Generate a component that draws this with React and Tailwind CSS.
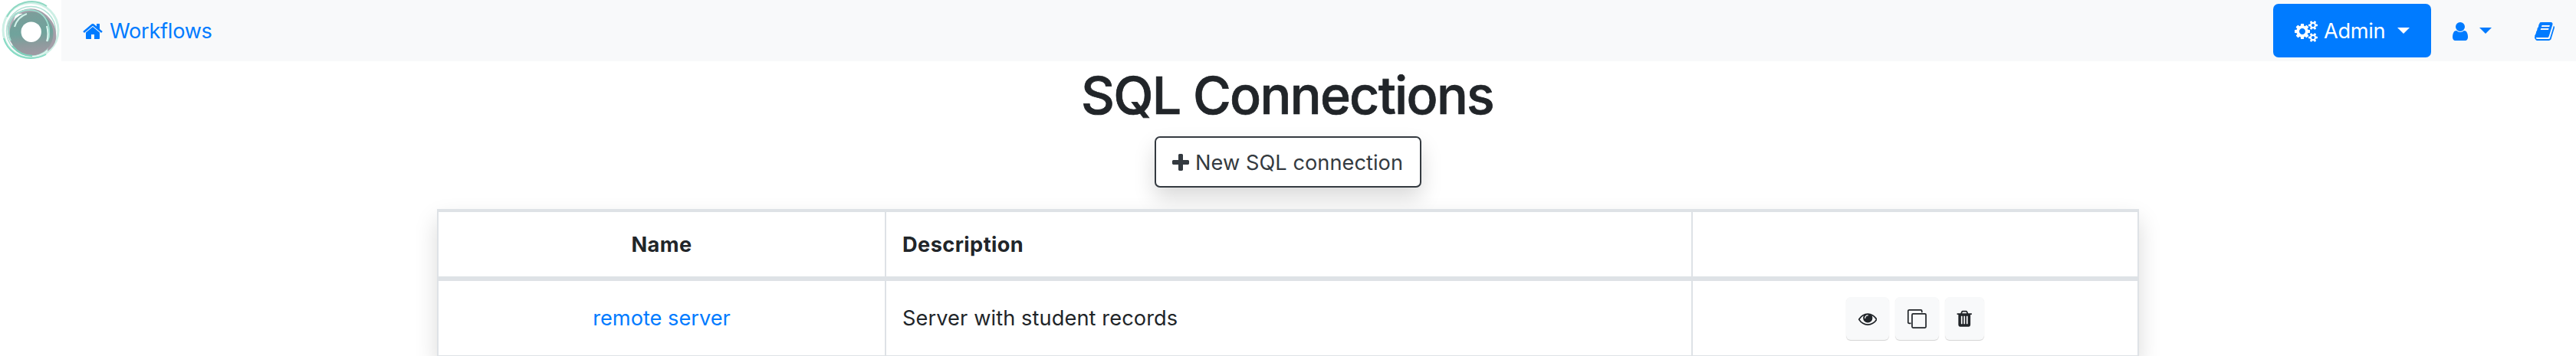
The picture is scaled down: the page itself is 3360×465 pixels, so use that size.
const paths = {
  home: "M1472 992v480q0 26-19 45t-45 19h-384v-384h-256v384h-384q-26 0-45-19t-19-45v-480q0-1 .5-3t.5-3l575-474 575 474q1 2 1 6zm223-69l-62 74q-8 9-21 11h-3q-13 0-21-7l-692-577-692 577q-12 8-24 7-13-2-21-11l-62-74q-8-10-7-23.5t11-21.5l719-599q32-26 76-26t76 26l244 204v-195q0-14 9-23t23-9h192q14 0 23 9t9 23v408l219 182q10 8 11 21.5t-7 23.5z",
  user: "M1536 1399q0 109-62.5 187t-150.5 78h-854q-88 0-150.5-78t-62.5-187q0-85 8.5-160.5t31.5-152 58.5-131 94-89 134.5-34.5q131 128 313 128t313-128q76 0 134.5 34.5t94 89 58.5 131 31.5 152 8.5 160.5zm-256-887q0 159-112.5 271.5t-271.5 112.5-271.5-112.5-112.5-271.5 112.5-271.5 271.5-112.5 271.5 112.5 112.5 271.5z",
  book: "M1703 478q40 57 18 129l-275 906q-19 64-76.5 107.5t-122.5 43.5h-923q-77 0-148.5-53.5t-99.5-131.5q-24-67-2-127 0-4 3-27t4-37q1-8-3-21.5t-3-19.5q2-11 8-21t16.5-23.5 16.5-23.5q23-38 45-91.5t30-91.5q3-10 .5-30t-.5-28q3-11 17-28t17-23q21-36 42-92t25-90q1-9-2.5-32t.5-28q4-13 22-30.5t22-22.5q19-26 42.5-84.5t27.5-96.5q1-8-3-25.5t-2-26.5q2-8 9-18t18-23 17-21q8-12 16.5-30.5t15-35 16-36 19.5-32 26.5-23.5 36-11.5 47.5 5.5l-1 3q38-9 51-9h761q74 0 114 56t18 130l-274 906q-36 119-71.5 153.5t-128.5 34.5h-869q-27 0-38 15-11 16-1 43 24 70 144 70h923q29 0 56-15.5t35-41.5l300-987q7-22 5-57 38 15 59 43zm-1064 2q-4 13 2 22.5t20 9.5h608q13 0 25.5-9.5t16.5-22.5l21-64q4-13-2-22.5t-20-9.5h-608q-13 0-25.5 9.5t-16.5 22.5zm-83 256q-4 13 2 22.5t20 9.5h608q13 0 25.5-9.5t16.5-22.5l21-64q4-13-2-22.5t-20-9.5h-608q-13 0-25.5 9.5t-16.5 22.5z",
  cogs: "M832 896q0-106-75-181t-181-75-181 75-75 181 75 181 181 75 181-75 75-181zm768 512q0-52-38-90t-90-38-90 38-38 90q0 53 37.5 90.5t90.5 37.5 90.5-37.5 37.5-90.5zm0-1024q0-52-38-90t-90-38-90 38-38 90q0 53 37.5 90.5t90.5 37.5 90.5-37.5 37.5-90.5zm-384 421v185q0 10-7 19.5t-16 10.5l-155 24q-11 35-32 76 34 48 90 115 7 11 7 20 0 12-7 19-23 30-82.5 89.5t-78.5 59.5q-11 0-21-7l-115-90q-37 19-77 31-11 108-23 155-7 24-30 24h-186q-11 0-20-7.5t-10-17.5l-23-153q-34-10-75-31l-118 89q-7 7-20 7-11 0-21-8-144-133-144-160 0-9 7-19 10-14 41-53t47-61q-23-44-35-82l-152-24q-10-1-17-9.5t-7-19.5v-185q0-10 7-19.5t16-10.5l155-24q11-35 32-76-34-48-90-115-7-11-7-20 0-12 7-20 22-30 82-89t79-59q11 0 21 7l115 90q34-18 77-32 11-108 23-154 7-24 30-24h186q11 0 20 7.5t10 17.5l23 153q34 10 75 31l118-89q8-7 20-7 11 0 21 8 144 133 144 160 0 8-7 19-12 16-42 54t-45 60q23 48 34 82l152 23q10 2 17 10.5t7 19.5zm640 533v140q0 16-149 31-12 27-30 52 51 113 51 138 0 4-4 7-122 71-124 71-8 0-46-47t-52-68q-20 2-30 2t-30-2q-14 21-52 68t-46 47q-2 0-124-71-4-3-4-7 0-25 51-138-18-25-30-52-149-15-149-31v-140q0-16 149-31 13-29 30-52-51-113-51-138 0-4 4-7 4-2 35-20t59-34 30-16q8 0 46 46.5t52 67.5q20-2 30-2t30 2q51-71 92-112l6-2q4 0 124 70 4 3 4 7 0 25-51 138 17 23 30 52 149 15 149 31zm0-1024v140q0 16-149 31-12 27-30 52 51 113 51 138 0 4-4 7-122 71-124 71-8 0-46-47t-52-68q-20 2-30 2t-30-2q-14 21-52 68t-46 47q-2 0-124-71-4-3-4-7 0-25 51-138-18-25-30-52-149-15-149-31v-140q0-16 149-31 13-29 30-52-51-113-51-138 0-4 4-7 4-2 35-20t59-34 30-16q8 0 46 46.5t52 67.5q20-2 30-2t30 2q51-71 92-112l6-2q4 0 124 70 4 3 4 7 0 25-51 138 17 23 30 52 149 15 149 31z",
  plus: "M1600 736v192q0 40-28 68t-68 28h-416v416q0 40-28 68t-68 28h-192q-40 0-68-28t-28-68v-416h-416q-40 0-68-28t-28-68v-192q0-40 28-68t68-28h416v-416q0-40 28-68t68-28h192q40 0 68 28t28 68v416h416q40 0 68 28t28 68z",
  eye: "M1664 960q-152-236-381-353 61 104 61 225 0 185-131.5 316.5t-316.5 131.5-316.5-131.5-131.5-316.5q0-121 61-225-229 117-381 353 133 205 333.5 326.5t434.5 121.5 434.5-121.5 333.5-326.5zm-720-384q0-20-14-34t-34-14q-125 0-214.5 89.5t-89.5 214.5q0 20 14 34t34 14 34-14 14-34q0-86 61-147t147-61q20 0 34-14t14-34zm848 384q0 34-20 69-140 230-376.5 368.5t-499.5 138.5-499.5-139-376.5-368q-20-35-20-69t20-69q140-229 376.5-368t499.5-139 499.5 139 376.5 368q20 35 20 69z",
  trash: "M704 1376v-704q0-14-9-23t-23-9h-64q-14 0-23 9t-9 23v704q0 14 9 23t23 9h64q14 0 23-9t9-23zm256 0v-704q0-14-9-23t-23-9h-64q-14 0-23 9t-9 23v704q0 14 9 23t23 9h64q14 0 23-9t9-23zm256 0v-704q0-14-9-23t-23-9h-64q-14 0-23 9t-9 23v704q0 14 9 23t23 9h64q14 0 23-9t9-23zm-544-992h448l-48-117q-7-9-17-11h-317q-10 2-17 11zm928 32v64q0 14-9 23t-23 9h-96v948q0 83-47 143.5t-113 60.5h-832q-66 0-113-58.5t-47-141.5v-952h-96q-14 0-23-9t-9-23v-64q0-14 9-23t23-9h309l70-167q15-37 54-63t79-26h320q40 0 79 26t54 63l70 167h309q14 0 23 9t9 23z",
};

function Icon({ name, viewBox = "0 0 1792 1792", className }) {
  return (
    <svg viewBox={viewBox} fill="currentColor" aria-hidden="true" className={`shrink-0 ${className}`}>
      <path d={paths[name]} />
    </svg>
  );
}

function CopyIcon() {
  return (
    <svg viewBox="0 0 25 25" fill="none" stroke="currentColor" strokeWidth="1.7" className="h-[25px] w-[25px]" aria-hidden="true">
      <path d="M4.6 18.3H2.2a1.4 1.4 0 0 1-1.4-1.4V2.2A1.4 1.4 0 0 1 2.2.9h15.2a1.4 1.4 0 0 1 1.4 1.4v1.9" />
      <rect x="6" y="5.9" width="18.1" height="18.2" rx="1.3" />
    </svg>
  );
}

function Caret() {
  return (
    <svg viewBox="0 0 16 8" fill="currentColor" className="h-2 w-4 shrink-0" aria-hidden="true">
      <path d="M0 0h16L8 8z" />
    </svg>
  );
}

function Logo() {
  return (
    <svg viewBox="0 0 80 80" className="h-20 w-20 shrink-0 bg-white" fill="none" aria-label="Logo">
      <defs>
        <linearGradient id="body" x1="0.3" y1="0" x2="0.4" y2="1">
          <stop offset="0" stopColor="#7d9d9a" />
          <stop offset="0.5" stopColor="#6fa39c" />
          <stop offset="0.75" stopColor="#8c9b9d" />
          <stop offset="1" stopColor="#a09aa4" />
        </linearGradient>
        <filter id="soft" x="-10%" y="-10%" width="120%" height="120%">
          <feGaussianBlur stdDeviation="0.7" />
        </filter>
      </defs>
      <g filter="url(#soft)">
        <circle cx="40" cy="39.5" r="36" stroke="#cdefe5" strokeWidth="3" />
        <path d="M9 22a36 36 0 0 1 52-14" stroke="#8fd8c3" strokeWidth="2" />
        <path d="M5 50a36 36 0 0 0 35 26q11 0 20-5" stroke="#86dbc4" strokeWidth="2" />
        <circle cx="40.5" cy="40.5" r="32" stroke="#b0e2d5" strokeWidth="1.5" />
        <path d="M18 19Q42 3 61 20q14 13 12 31-2 10-11 16 4-28-7-38-13-13-33-11z" fill="#a49fa9" />
        <path d="M10 43q-2-16 11-26-7 18-4 34l4 12Q11 55 10 43z" fill="#b5aeb8" />
        <circle cx="41" cy="44" r="28.5" fill="url(#body)" />
        <path d="M14 53a30 30 0 0 1 4-32Q32 9 49 15q17 9 15 33l-2 6" stroke="#9fdfd0" strokeWidth="1.8" />
        <path d="M61 34q3 11 0 20" stroke="#e4fbf5" strokeWidth="1.8" />
        <path d="M19 35q4-13 16-17" stroke="#d0f2e9" strokeWidth="2.2" />
        <path d="M16 60q11 13 26 13" stroke="#7fd0bb" strokeWidth="2.4" />
        <circle cx="40.7" cy="41.7" r="13.2" fill="#fff" />
      </g>
    </svg>
  );
}

function ActionButton({ className, children }) {
  return (
    <button className={`flex h-14 items-center justify-center rounded-[6px] bg-[#f8f9fa] shadow-[0_1px_1px_rgba(0,0,0,0.18)] ${className}`}>
      {children}
    </button>
  );
}

export default function App() {
  return (
    <div className="h-[465px] overflow-hidden bg-white font-['Inter','Liberation_Sans',sans-serif] text-[27.2px] leading-[42px] text-[#212529]">
      <nav className="flex h-20 items-center bg-[#f8f9fa] text-[#007bff]">
        <Logo />
        <a className="ml-[27px] flex items-center pt-0.5">
          <Icon name="home" className="h-7 w-7" />
          <span className="ml-2 tracking-[-0.3px]">Workflows</span>
        </a>
        <div className="ml-auto flex items-center pr-[27px]">
          <button className="flex h-[70px] w-[206px] items-center rounded-[7px] bg-[#007bff] pl-7 text-white">
            <Icon name="cogs" viewBox="-64 0 1920 1792" className="mt-0.5 h-7 w-[30px]" />
            <span className="ml-[8px] w-[96px] pt-0.5 text-left tracking-[-0.3px]">Admin</span>
            <Caret />
          </button>
          <button className="ml-6 flex items-center gap-[11px]">
            <Icon name="user" className="mt-0.5 h-7 w-7" />
            <Caret />
          </button>
          <Icon name="book" className="mt-0.5 ml-[55px] h-7 w-7" />
        </div>
      </nav>
      <main className="flex flex-col items-center">
        <h1 className="h-[98px] pt-0.5 pr-[2px] text-[68px] leading-[84px] font-medium tracking-[-1.7px] [-webkit-text-stroke:0.7px_#212529]">SQL Connections</h1>
        <button className="flex h-[67px] w-[348px] items-center rounded-[7px] border-2 border-[#343a40] bg-white pt-0.5 pl-[18px] text-[#343a40] shadow-[0_14px_28px_rgba(0,0,0,0.15)]">
          <Icon name="plus" className="h-7 w-7" />
          <span className="ml-[5px] whitespace-nowrap tracking-[0.05px]">New SQL connection</span>
        </button>
        <div className="mt-7 w-[2220px] border-x-2 border-t-4 border-b-2 border-[#dee2e6] bg-white shadow-[0_14px_28px_rgba(0,0,0,0.15)]">
          <div className="grid h-[90px] grid-cols-[584px_1052px_580px] border-b-6 border-[#dee2e6] font-bold tracking-[0.4px]">
            <div className="flex items-center justify-center border-r-2 border-[#dee2e6] pt-0.5">Name</div>
            <div className="flex items-center border-r-2 border-[#dee2e6] pt-0.5 pl-[21px]">Description</div>
            <div />
          </div>
          <div className="grid h-[97px] grid-cols-[584px_1052px_580px]">
            <div className="flex items-center justify-center border-r-2 border-[#dee2e6] pt-px text-[#007bff]">remote server</div>
            <div className="flex items-center border-r-2 border-[#dee2e6] pt-px pl-[21px] tracking-[0.1px]">Server with student records</div>
            <div className="flex items-center justify-center gap-2 pt-px">
              <ActionButton className="w-14"><Icon name="eye" className="h-[24.5px] w-[24.5px]" /></ActionButton>
              <ActionButton className="w-[57px]"><CopyIcon /></ActionButton>
              <ActionButton className="w-[51px]"><Icon name="trash" className="h-[24.5px] w-[24.5px]" /></ActionButton>
            </div>
          </div>
        </div>
      </main>
    </div>
  );
}
